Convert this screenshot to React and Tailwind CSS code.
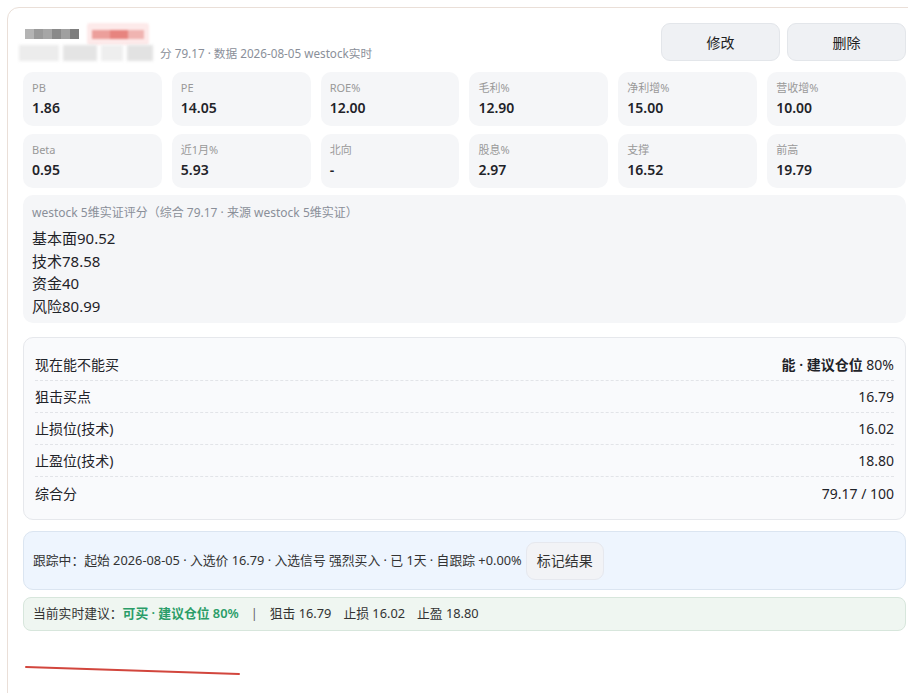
import React from "react";

const metrics = [
  { label: "PB", value: "1.86" },
  { label: "PE", value: "14.05" },
  { label: "ROE%", value: "12.00" },
  { label: "毛利%", value: "12.90" },
  { label: "净利增%", value: "15.00" },
  { label: "营收增%", value: "10.00" },
  { label: "Beta", value: "0.95" },
  { label: "近1月%", value: "5.93" },
  { label: "北向", value: "-" },
  { label: "股息%", value: "2.97" },
  { label: "支撑", value: "16.52" },
  { label: "前高", value: "19.79" },
];

const scores = ["基本面90.52", "技术78.58", "资金40", "风险80.99"];

const plan = [
  { label: "狙击买点", value: "16.79" },
  { label: "止损位(技术)", value: "16.02" },
  { label: "止盈位(技术)", value: "18.80" },
  { label: "综合分", value: "79.17 / 100" },
];

// masked name / code, rendered as soft pixel blocks
const nameBlocks = ["#b4b4b4", "#9a9a9a", "#a6a6a6", "#8a8a8a", "#a0a0a0", "#7e7e7e"];

function MaskedTitle() {
  return (
    <div className="flex h-[22px] items-center gap-[8px] pl-[2px]">
      <div className="flex h-[10px] blur-[0.6px]">
        {nameBlocks.map((c, i) => (
          <div key={i} className="h-full w-[9px]" style={{ background: c }} />
        ))}
      </div>
      <div className="flex h-[22px] w-[62px] items-center justify-center rounded-[3px] bg-[#fdeaea] blur-[0.8px]">
        <div className="flex h-[9px] w-[52px]">
          <div className="h-full w-[18px] bg-[#ec9f9b]" />
          <div className="h-full w-[18px] bg-[#e7847f]" />
          <div className="h-full w-[16px] bg-[#f0b4b1]" />
        </div>
      </div>
    </div>
  );
}

function Metric({ label, value }) {
  return (
    <div className="h-[54px] rounded-[10px] bg-[#f5f6f8] px-[9px] pt-[9px]">
      <div className="text-[11px] leading-[14px] text-[#999]">{label}</div>
      <div className="mt-[3px] text-[14px] font-semibold leading-[20px] text-[#1f2329]">{value}</div>
    </div>
  );
}

export default function App() {
  return (
    <div
      className="h-[693px] w-[908px] overflow-hidden bg-white pl-[7px] pt-[7px]"
      style={{ fontFamily: '"Noto Sans", "Noto Sans CJK SC", sans-serif' }}
    >
      <div className="h-[700px] w-[915px] rounded-[12px] border border-[#eadfd8] p-[15px]">
        <div className="flex items-start justify-between">
          <div>
            <MaskedTitle />
            <div className="flex h-[16px] items-center text-[11.7px] leading-[16px] text-[#8a8f99]">
              <div className="mr-[2px] flex h-[16px] w-[135px] -translate-x-[4px] gap-[4px] blur-[1.5px]">
                <div className="h-full w-[40px] bg-[#ececec]" />
                <div className="h-full w-[34px] bg-[#e4e4e4]" />
                <div className="h-full w-[22px] bg-[#eeeeee]" />
                <div className="h-full w-[26px] bg-[#e2e2e2]" />
              </div>
              <span>分 79.17 · 数据 2026-08-05 westock实时</span>
            </div>
          </div>
          <div className="flex gap-[7px]">
            <button className="h-[38px] w-[119px] rounded-[9px] border border-[#e3e6ea] bg-[#eff1f4] text-[14px] text-[#222]">
              修改
            </button>
            <button className="h-[38px] w-[119px] rounded-[9px] border border-[#e3e6ea] bg-[#eff1f4] text-[14px] text-[#222]">
              删除
            </button>
          </div>
        </div>

        <div className="mt-[11px] grid grid-cols-6 gap-x-[10px] gap-y-[8px]">
          {metrics.map((m) => (
            <Metric key={m.label} label={m.label} value={m.value} />
          ))}
        </div>

        <div className="mt-[7px] rounded-[10px] bg-[#f5f6f8] px-[9px] pb-[6px] pt-[10px]">
          <div className="text-[12px] leading-[16px] text-[#8a8f99]">
            westock 5维实证评分（综合 79.17 · 来源 westock 5维实证）
          </div>
          <div className="mt-[6px] text-[15px] leading-[22.5px] text-[#1f2329]">
            {scores.map((s) => (
              <div key={s}>{s}</div>
            ))}
          </div>
        </div>

        <div className="mt-[14px] rounded-[10px] border border-[#e6e8ec] bg-[#f9fafc] px-[11px] pb-[10px] pt-[11px] text-[14px] text-[#1f2329]">
          <div className="flex h-[32px] items-center justify-between border-b border-dashed border-[#e2e4e8]">
            <span>现在能不能买</span>
            <span>
              <span className="font-semibold">能 · 建议仓位</span> 80%
            </span>
          </div>
          {plan.map((row, i) => (
            <div
              key={row.label}
              className={
                i < plan.length - 1
                  ? "flex h-[32px] items-center justify-between border-b border-dashed border-[#e2e4e8]"
                  : "flex h-[32px] items-center justify-between"
              }
            >
              <span>{row.label}</span>
              <span>{row.value}</span>
            </div>
          ))}
        </div>

        <div className="mt-[11px] flex h-[59px] items-center gap-[4px] rounded-[10px] border border-[#dbe5f1] bg-[#eef5fe] px-[9px] text-[12.8px] text-[#333]">
          <span>跟踪中：起始 2026-08-05 · 入选价 16.79 · 入选信号 强烈买入 · 已 1天 · 自跟踪 +0.00%</span>
          <button className="h-[38px] w-[78px] rounded-[9px] border border-[#e6e8ee] bg-[#f2f3f6] text-[14px] text-[#333]">
            标记结果
          </button>
        </div>

        <div className="mt-[7px] flex h-[34px] items-center rounded-[8px] border border-[#d7e6dc] bg-[#eff6f1] px-[9px] text-[12.8px] text-[#333]">
          <span>当前实时建议：</span>
          <span className="font-semibold text-[#2a9d68]">可买 · 建议仓位 80%</span>
          <span className="mx-[12px] text-[#666]">|</span>
          <span>狙击 16.79</span>
          <span className="ml-[12px]">止损 16.02</span>
          <span className="ml-[12px]">止盈 18.80</span>
        </div>

        <svg className="ml-[2px] mt-[34px]" width="220" height="12" viewBox="0 0 220 12">
          <line x1="1" y1="2" x2="214" y2="9" stroke="#d2463d" strokeWidth="2" strokeLinecap="round" />
        </svg>
      </div>
    </div>
  );
}
